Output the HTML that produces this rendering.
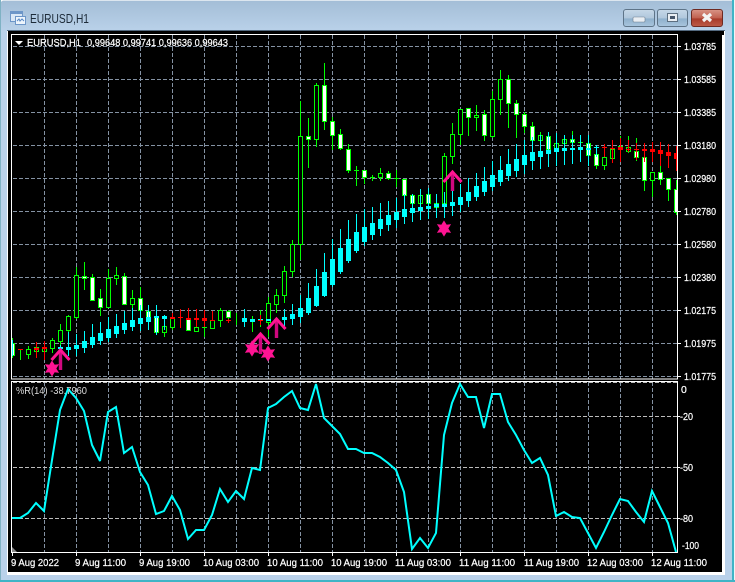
<!DOCTYPE html>
<html><head><meta charset="utf-8"><title>EURUSD,H1</title>
<style>
html,body{margin:0;padding:0;background:#fff;width:735px;height:582px;overflow:hidden}
svg{display:block}
text{font-family:"Liberation Sans",sans-serif;font-size:10.5px;fill:#fff;stroke:#fff;stroke-width:.22px}
</style></head><body>
<svg width="735" height="582" viewBox="0 0 735 582" xmlns="http://www.w3.org/2000/svg">
<defs>
<linearGradient id="tb" x1="0" y1="0" x2="0" y2="1"><stop offset="0" stop-color="#a3bdd6"/><stop offset="1" stop-color="#bad2ea"/></linearGradient>
<linearGradient id="bt" x1="0" y1="0" x2="0" y2="1"><stop offset="0" stop-color="#c6d8e8"/><stop offset=".5" stop-color="#b0c7dc"/><stop offset=".55" stop-color="#8fb0cc"/><stop offset="1" stop-color="#a9c6de"/></linearGradient>
<linearGradient id="cl" x1="0" y1="0" x2="0" y2="1"><stop offset="0" stop-color="#d99587"/><stop offset=".5" stop-color="#c0604f"/><stop offset=".55" stop-color="#a83a2a"/><stop offset="1" stop-color="#bd5b47"/></linearGradient>
<clipPath id="c1"><rect x="12" y="35" width="665" height="344"/></clipPath>
<clipPath id="c2"><rect x="12" y="382" width="665" height="170"/></clipPath>
</defs>
<!-- window -->
<rect width="735" height="582" fill="#b9d1ea"/>
<rect width="735" height="32" fill="url(#tb)"/>
<rect x="0" y="0" width="735" height="1" fill="#dce6ef"/>
<path d="M0 0h3l-3 3z" fill="#fff"/>
<path d="M735 0h-3l3 3z" fill="#fff"/>
<rect x="0" y="0" width="1" height="582" fill="#7fb2c4"/>
<rect x="732" y="0" width="2" height="582" fill="#3fb4c6"/>
<rect x="734" y="0" width="1" height="582" fill="#eef4f6"/>
<rect x="0" y="580" width="735" height="2" fill="#3fb4c6"/>
<rect x="7" y="30" width="718" height="545" fill="#fff"/>
<rect x="7" y="30" width="718" height="1" fill="#53697f"/>
<rect x="8" y="31" width="714" height="541" fill="#000"/>
<rect x="722" y="31" width="2" height="4" fill="#000"/>
<!-- title icon -->
<rect x="10.5" y="11.5" width="12" height="10" fill="#dbe8f6" stroke="#6d96c8"/>
<rect x="11" y="12" width="11" height="2" fill="#6d96c8"/>
<rect x="15.5" y="16.5" width="10" height="8" fill="#eef5fc" stroke="#6d96c8"/>
<path d="M17 21l2-2 1 2 2-2 2 2" fill="none" stroke="#5a8ac6"/>
<text x="30" y="23" textLength="59" lengthAdjust="spacingAndGlyphs" style="font-size:12.5px;fill:#1c2a38;stroke:none">EURUSD,H1</text>
<!-- buttons -->
<rect x="623.5" y="9.5" width="31" height="17" rx="2.5" fill="url(#bt)" stroke="#5e7488"/>
<rect x="633" y="17" width="12" height="5" rx="1" fill="#e9eef3" stroke="#6d7f90" stroke-width=".6"/>
<rect x="657.5" y="9.5" width="30" height="17" rx="2.5" fill="url(#bt)" stroke="#5e7488"/>
<rect x="667.5" y="13.5" width="10" height="8" fill="#e9eef3" stroke="#5d6f80"/>
<rect x="670" y="16" width="5" height="3" fill="#46566a"/>
<rect x="691.5" y="9.5" width="31" height="17" rx="2.5" fill="url(#cl)" stroke="#6e2a22"/>
<path d="M703 14l8 7M711 14l-8 7" stroke="#f3f3f3" stroke-width="3.2" fill="none"/>

<!-- grid -->
<g fill="none" stroke="#8492a3" stroke-width="1" stroke-dasharray="4 2">
<path d="M13 46.5H677M13 79.5H677M13 112.5H677M13 145.5H677M13 178.5H677M13 211.5H677M13 244.5H677M13 277.5H677M13 310.5H677M13 343.5H677M13 376.5H677"/>
<path d="M44.5 35V379M76.5 35V379M108.5 35V379M140.5 35V379M172.5 35V379M204.5 35V379M236.5 35V379M268.5 35V379M300.5 35V379M332.5 35V379M364.5 35V379M396.5 35V379M428.5 35V379M460.5 35V379M492.5 35V379M524.5 35V379M556.5 35V379M588.5 35V379M620.5 35V379M652.5 35V379"/>
<path d="M44.5 382V552M76.5 382V552M108.5 382V552M140.5 382V552M172.5 382V552M204.5 382V552M236.5 382V552M268.5 382V552M300.5 382V552M332.5 382V552M364.5 382V552M396.5 382V552M428.5 382V552M460.5 382V552M492.5 382V552M524.5 382V552M556.5 382V552M588.5 382V552M620.5 382V552M652.5 382V552"/>
<path stroke="#bcbcbc" d="M13 382.5H677M13 416.5H677M13 467.5H677M13 518.5H677"/>
</g>

<g clip-path="url(#c1)">
<!-- green wicks -->
<path fill="none" stroke="#00ff00" d="M12.5 338V358M20.5 349V360M28.5 346V359M36.5 347V352M44.5 347V352M52.5 338V353M60.5 324V346M68.5 315V342M76.5 267V319M84.5 262V290M92.5 274V301M100.5 289V316M108.5 269V307M116.5 267V285M124.5 273V305M132.5 290V315M140.5 287V320M148.5 305V330M156.5 310V335M164.5 315V337M172.5 318V330M196.5 327V332M204.5 325V337M212.5 320V329M220.5 308V327M228.5 310V323M236.5 313V325M244.5 309V327M252.5 316V332M260.5 310V327M268.5 297V337M276.5 289V313M284.5 266V303M292.5 240V277M300.5 101V260M308.5 118V168M316.5 83V147M324.5 63V130M332.5 117V150M340.5 129V150M348.5 144V173M356.5 166V186M364.5 170V184M372.5 175V181M380.5 168V181M388.5 171V180M396.5 170V187M404.5 179V208M412.5 194V208M420.5 189V208M428.5 188V206M436.5 194V207M444.5 153V204M452.5 123V164M460.5 109V145M468.5 108V136M476.5 105V131M484.5 110V141M492.5 91V138M500.5 70V115M508.5 75V128M516.5 100V138M524.5 112V133M532.5 122V150M540.5 132V145M548.5 132V150M556.5 133V150M564.5 135V145M572.5 131V142M580.5 135V150M588.5 135V155M596.5 145V169M604.5 154V170M612.5 149V163M620.5 136V149M628.5 136V153M636.5 138V161M644.5 157V191M652.5 172V197M660.5 166V185M668.5 178V201M676.5 180V215"/>
<!-- green hollow bodies -->
<path fill="#000" stroke="#00ff00" d="M26.5 349.5h4v5h-4zM34.5 347.5h4v4h-4zM42.5 347.5h4v4h-4zM50.5 340.5h4v8h-4zM58.5 330.5h4v11h-4zM66.5 316.5h4v14h-4zM74.5 275.5h4v42h-4zM106.5 278.5h4v29h-4zM114.5 275.5h4v3h-4zM130.5 298.5h4v6h-4zM162.5 326.5h4v6h-4zM170.5 318.5h4v9h-4zM194.5 327.5h4v4h-4zM210.5 320.5h4v8h-4zM218.5 310.5h4v10h-4zM266.5 303.5h4v19h-4zM274.5 295.5h4v9h-4zM282.5 271.5h4v24h-4zM290.5 244.5h4v27h-4zM298.5 136.5h4v108h-4zM314.5 85.5h4v54h-4zM378.5 173.5h4v4h-4zM418.5 195.5h4v8h-4zM442.5 156.5h4v47h-4zM450.5 134.5h4v22h-4zM458.5 109.5h4v25h-4zM474.5 115.5h4v2h-4zM490.5 99.5h4v37h-4zM498.5 79.5h4v20h-4zM538.5 135.5h4v5h-4zM554.5 143.5h4v6h-4zM562.5 139.5h4v4h-4zM602.5 157.5h4v8h-4zM610.5 149.5h4v9h-4zM626.5 147.5h4v4h-4zM650.5 172.5h4v8h-4z"/>
<!-- green filled white bodies -->
<path fill="#fff" stroke="#00ff00" d="M10.5 343.5h4v12h-4zM82.5 276.5h4v2h-4zM90.5 277.5h4v23h-4zM98.5 298.5h4v9h-4zM122.5 276.5h4v28h-4zM138.5 298.5h4v12h-4zM146.5 311.5h4v6h-4zM154.5 317.5h4v15h-4zM186.5 318.5h4v12h-4zM226.5 311.5h4v6h-4zM306.5 136.5h4v3h-4zM322.5 85.5h4v36h-4zM330.5 121.5h4v14h-4zM338.5 134.5h4v14h-4zM346.5 149.5h4v21h-4zM362.5 170.5h4v7h-4zM386.5 173.5h4v5h-4zM402.5 179.5h4v16h-4zM410.5 195.5h4v8h-4zM426.5 194.5h4v9h-4zM434.5 203.5h4v4h-4zM466.5 108.5h4v9h-4zM482.5 114.5h4v21h-4zM506.5 79.5h4v24h-4zM514.5 103.5h4v11h-4zM522.5 114.5h4v12h-4zM530.5 126.5h4v14h-4zM546.5 136.5h4v13h-4zM570.5 139.5h4v3h-4zM586.5 143.5h4v12h-4zM594.5 154.5h4v11h-4zM634.5 151.5h4v6h-4zM642.5 157.5h4v23h-4zM658.5 172.5h4v7h-4zM666.5 178.5h4v11h-4zM674.5 189.5h4v23h-4z"/>
<path stroke="#00ff00" fill="none" d="M18 349.5h5M354 170.5h5M370 177.5h5M394 178.5h5M578 142.5h5M618 146.5h5M202 327.5h5"/>

<!-- cyan wicks -->
<path fill="none" stroke="#00ffff" d="M12.5 340V356M60.5 345V355M68.5 332V356M76.5 334V356M84.5 331V353M92.5 324V348M100.5 322V345M108.5 317V342M116.5 314V338M124.5 311V334M132.5 308V331M140.5 305V331M148.5 305V330M156.5 305V335M164.5 315V330M244.5 309V327M284.5 309V327M292.5 304V325M300.5 295V323M308.5 283V315M316.5 269V307M324.5 253V297M332.5 239V287M340.5 229V274M348.5 220V263M356.5 214V253M364.5 209V246M372.5 207V240M380.5 203V236M388.5 201V231M396.5 198V228M404.5 194V224M412.5 194V222M420.5 189V220M428.5 188V219M436.5 194V218M444.5 192V218M452.5 191V216M460.5 184V212M468.5 178V207M476.5 173V201M484.5 167V196M492.5 161V191M500.5 156V186M508.5 149V181M516.5 144V177M524.5 140V174M532.5 137V170M540.5 135V169M548.5 132V167M556.5 133V166M564.5 135V165M572.5 135V164M580.5 135V162M588.5 135V166M596.5 145V157"/>
<!-- cyan bodies -->
<path fill="#00ffff" d="M10 344h3v10h-3zM58 347h5v2h-5zM66 347h5v3h-5zM74 345h5v4h-5zM82 341h5v7h-5zM90 337h5v8h-5zM98 333h5v8h-5zM106 329h5v9h-5zM114 326h5v8h-5zM122 323h5v7h-5zM130 320h5v7h-5zM138 318h5v6h-5zM146 317h5v5h-5zM154 316h5v2h-5zM162 316h5v3h-5zM242 318h5v4h-5zM250 319h5v3h-5zM258 319h5v2h-5zM266 319h5v2h-5zM282 317h5v3h-5zM290 314h5v5h-5zM298 308h5v9h-5zM306 298h5v15h-5zM314 286h5v20h-5zM322 272h5v24h-5zM330 259h5v26h-5zM338 248h5v24h-5zM346 239h5v22h-5zM354 232h5v19h-5zM362 227h5v15h-5zM370 223h5v12h-5zM378 219h5v10h-5zM386 215h5v10h-5zM394 212h5v8h-5zM402 209h5v8h-5zM410 208h5v5h-5zM418 207h5v4h-5zM426 206h5v3h-5zM434 204h5v3h-5zM442 204h5v3h-5zM450 202h5v4h-5zM458 197h5v8h-5zM466 192h5v9h-5zM474 186h5v11h-5zM482 181h5v11h-5zM490 175h5v12h-5zM498 170h5v12h-5zM506 164h5v12h-5zM514 159h5v12h-5zM522 155h5v10h-5zM530 152h5v9h-5zM538 151h5v6h-5zM546 150h5v4h-5zM554 148h5v4h-5zM562 148h5v3h-5zM570 148h5v2h-5zM578 147h5v3h-5zM586 148h5v2h-5zM594 147h5v1h-5z"/>
<!-- red -->
<path fill="none" stroke="#ff0000" d="M36.5 342V358M44.5 341V360M172.5 313V318M180.5 309V328M188.5 308V318M196.5 309V327M204.5 310V327M212.5 311V320M228.5 319V323M260.5 315V325M604.5 144V157M612.5 140V163M620.5 138V162M628.5 140V152M636.5 143V160M644.5 143V162M652.5 142V162M660.5 142V166M668.5 144V168M676.5 146V171"/>
<path fill="#ff0000" d="M18 349h5v1h-5zM34 348h5v2h-5zM42 347h5v2h-5zM170 317h5v2h-5zM178 317h5v1h-5zM186 318h5v2h-5zM194 318h5v2h-5zM202 318h5v3h-5zM210 320h5v1h-5zM226 320h5v1h-5zM258 320h5v1h-5zM602 147h5v1h-5zM610 148h5v1h-5zM618 147h5v3h-5zM626 149h5v1h-5zM634 149h5v1h-5zM642 149h5v2h-5zM650 149h5v3h-5zM658 150h5v4h-5zM666 152h5v4h-5zM674 153h5v6h-5z"/>

<!-- arrows -->
<g fill="none" stroke-linejoin="miter">
<path d="M60.5 351V370M260.5 335V354M276.5 320V338M452.5 172V191" stroke="#d0087f" stroke-width="3.4"/>
<path d="M51.5 360L60.500 350L69.500 360M251.500 344L260.500 334L269.500 344M267.500 329L276.500 319L285.500 329M443.500 182L452.500 172L461.500 182" stroke="#ff1493" stroke-width="3"/>
</g>
<!-- stars -->
<g fill="#ff1493" stroke="#ff1493" stroke-width=".6">
<polygon points="52,361 54.500,365 58.500,364.500 56,368.500 58.500,372.500 54.500,372 52,376 49.500,372 45.500,372.500 48,368.500 45.500,364.500 49.500,365"/>
<polygon points="252,341 254.500,345 258.500,344.500 256,348.500 258.500,352.500 254.500,352 252,356 249.500,352 245.500,352.500 248,348.500 245.500,344.500 249.500,345"/>
<polygon points="268,346 270.500,350 274.500,349.500 272,353.500 274.500,357.500 270.500,357 268,361 265.500,357 261.500,357.500 264,353.500 261.500,349.500 265.500,350"/>
<polygon points="444,221 446.500,225 450.500,224.500 448,228.500 450.500,232.500 446.500,232 444,236 441.500,232 437.500,232.500 440,228.500 437.500,224.500 441.500,225"/>
</g>
</g>

<!-- WPR -->
<g clip-path="url(#c2)">
<polyline fill="none" stroke="#00ffff" stroke-width="2" stroke-linejoin="miter" stroke-miterlimit="3" points="12,518 20,518 28,513 36,503 44,511 52,460 60,410 68,389 76,398 84,411 92,445 100,461 108,412 116,407 124,453 132,447 140,472 148,485 156,514 164,511 172,496 180,510 188,539 196,530 204,530 212,515 220,489 228,502 236,491 244,499 252,468 260,470 268,408 276,404 284,397 292,391 300,408 308,410 316,384 324,418 332,426 340,434 348,449 356,449 364,453 372,453 380,457 388,463 396,470 404,492 412,549 420,538 428,548 436,533 444,435 452,403 460,384 468,397 476,397 484,428 492,394 500,394 508,422 516,435 524,450 532,463 540,458 548,475 556,516 564,512 572,517 580,518 588,533 596,548 604,532 612,515 620,499 628,501 636,512 644,522 652,491 660,507 668,523 676,552"/>
<path d="M12 547l5 5h-5z" fill="#8a8a8a"/>
</g>

<!-- frames -->
<rect x="11.500" y="34.500" width="666" height="344.500" fill="none" stroke="#fff"/>
<rect x="11.500" y="381.500" width="666" height="171" fill="none" stroke="#fff"/>
<!-- ticks -->
<path fill="none" stroke="#fff" d="M678 46.500h3M678 79.500h3M678 112.500h3M678 145.500h3M678 178.500h3M678 211.500h3M678 244.500h3M678 277.500h3M678 310.500h3M678 343.500h3M678 376.500h3M678 416.500h2M678 467.500h2M678 518.500h2M12.500 553v3M76.500 553v3M140.500 553v3M204.500 553v3M268.500 553v3M332.500 553v3M396.500 553v3M460.500 553v3M524.500 553v3M588.500 553v3M652.500 553v3"/>

<!-- header -->
<path d="M15 41h8l-4 4z" fill="#fff"/>
<text x="27" y="46" textLength="54" lengthAdjust="spacingAndGlyphs">EURUSD,H1</text>
<text x="87" y="46" textLength="141" lengthAdjust="spacingAndGlyphs">0,99648 0,99741 0,99636 0,99643</text>
<text x="16" y="394" textLength="71" lengthAdjust="spacingAndGlyphs" style="fill:#dcdcdc;stroke:none">%R(14) -38.7960</text>

<!-- price labels -->
<g>
<text x="684" y="50" textLength="32" lengthAdjust="spacingAndGlyphs">1.03785</text>
<text x="684" y="83" textLength="32" lengthAdjust="spacingAndGlyphs">1.03585</text>
<text x="684" y="116" textLength="32" lengthAdjust="spacingAndGlyphs">1.03385</text>
<text x="684" y="149" textLength="32" lengthAdjust="spacingAndGlyphs">1.03180</text>
<text x="684" y="182" textLength="32" lengthAdjust="spacingAndGlyphs">1.02980</text>
<text x="684" y="215" textLength="32" lengthAdjust="spacingAndGlyphs">1.02780</text>
<text x="684" y="248" textLength="32" lengthAdjust="spacingAndGlyphs">1.02580</text>
<text x="684" y="281" textLength="32" lengthAdjust="spacingAndGlyphs">1.02380</text>
<text x="684" y="314" textLength="32" lengthAdjust="spacingAndGlyphs">1.02175</text>
<text x="684" y="347" textLength="32" lengthAdjust="spacingAndGlyphs">1.01975</text>
<text x="684" y="380" textLength="32" lengthAdjust="spacingAndGlyphs">1.01775</text>
<text x="681" y="393">0</text>
<text x="680" y="420" textLength="13" lengthAdjust="spacingAndGlyphs">-20</text>
<text x="680" y="471" textLength="13" lengthAdjust="spacingAndGlyphs">-50</text>
<text x="680" y="522" textLength="13" lengthAdjust="spacingAndGlyphs">-80</text>
<text x="682" y="549" textLength="17" lengthAdjust="spacingAndGlyphs">-100</text>
</g>
<!-- time labels -->
<g>
<text x="11" y="566" textLength="48" lengthAdjust="spacingAndGlyphs">9 Aug 2022</text>
<text x="75" y="566" textLength="51" lengthAdjust="spacingAndGlyphs">9 Aug 11:00</text>
<text x="139" y="566" textLength="51" lengthAdjust="spacingAndGlyphs">9 Aug 19:00</text>
<text x="203" y="566" textLength="56" lengthAdjust="spacingAndGlyphs">10 Aug 03:00</text>
<text x="267" y="566" textLength="56" lengthAdjust="spacingAndGlyphs">10 Aug 11:00</text>
<text x="331" y="566" textLength="56" lengthAdjust="spacingAndGlyphs">10 Aug 19:00</text>
<text x="395" y="566" textLength="56" lengthAdjust="spacingAndGlyphs">11 Aug 03:00</text>
<text x="459" y="566" textLength="56" lengthAdjust="spacingAndGlyphs">11 Aug 11:00</text>
<text x="524" y="566" textLength="55" lengthAdjust="spacingAndGlyphs">11 Aug 19:00</text>
<text x="587" y="566" textLength="56" lengthAdjust="spacingAndGlyphs">12 Aug 03:00</text>
<text x="651" y="566" textLength="56" lengthAdjust="spacingAndGlyphs">12 Aug 11:00</text>
</g>
</svg>
</body></html>
